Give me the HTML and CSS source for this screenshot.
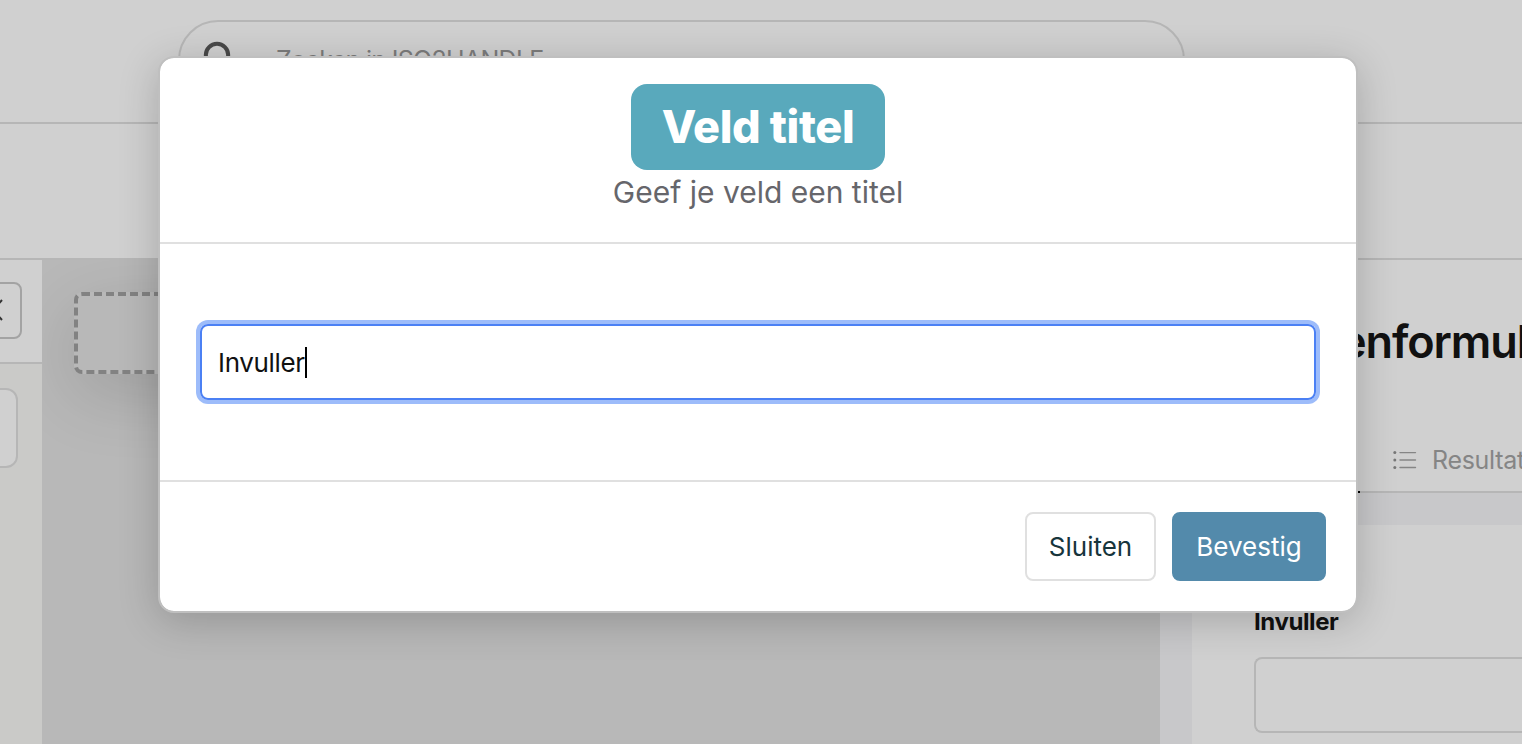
FILE: index.html
```
<!DOCTYPE html>
<html lang="nl">
<head>
    <meta charset="UTF-8">
    <meta name="viewport" content="width=device-width, initial-scale=1.0">
    <title>Veld titel</title>
    <link rel="stylesheet" href="styles.css">
</head>
<body>
    <header class="topbar">
        <div class="search">
            <svg class="search-icon" viewBox="0 0 34 34" fill="none" stroke="#494949" stroke-width="4">
                <circle cx="15" cy="15" r="11.2"/>
                <path d="M23 23l9 9"/>
            </svg>
            <span>Zoeken in ISO2HANDLE</span>
        </div>
    </header>
    <div class="subbar"></div>
    <main class="builder">
        <aside class="sidebar">
            <div class="sidebar-top">
                <button class="collapse">
                    <svg width="12" height="22" viewBox="0 0 12 22" fill="none" stroke="#333" stroke-width="2">
                        <path d="M11 1L2 11l9 10"/>
                    </svg>
                </button>
            </div>
            <div class="sidebar-item"></div>
        </aside>
        <section class="canvas">
            <div class="dropzone"></div>
        </section>
        <section class="form">
            <div class="form-head">
                <h1>enformul</h1>
                <div class="tabs">
                    <span class="tab-active"></span>
                    <svg width="24" height="20" viewBox="0 0 24 20" fill="none" stroke="#858585" stroke-width="1.4" stroke-linecap="round">
                        <path d="M7 2.6h15.5M7 10h15.5M7 17.5h15.5"/>
                        <g fill="#777" stroke="none">
                            <circle cx="1.8" cy="2.6" r="1.5"/>
                            <circle cx="1.8" cy="10" r="1.5"/>
                            <circle cx="1.8" cy="17.5" r="1.5"/>
                        </g>
                    </svg>
                    <span>Resultat</span>
                </div>
            </div>
            <div class="form-card">
                <div class="label">Invuller</div>
                <div class="field"></div>
            </div>
        </section>
    </main>

    <div class="modal">
        <div class="modal-header">
            <h2>Veld titel</h2>
            <p>Geef je veld een titel</p>
        </div>
        <div class="modal-body">
            <div class="input"><span>Invuller</span><i class="caret"></i></div>
        </div>
        <div class="modal-footer">
            <button class="button">Sluiten</button>
            <button class="button primary">Bevestig</button>
        </div>
    </div>
</body>
</html>
```

FILE: styles.css
```
* {
    box-sizing: border-box;
}

body {
    font-family: Inter, 'Liberation Sans', sans-serif;
    background-color: #d0d0d0;
    margin: 0;
    height: 744px;
    display: flex;
    flex-direction: column;
    overflow: hidden;
}

h1, h2, p {
    margin: 0;
}

button {
    font-family: inherit;
}

svg {
    flex: none;
}

.topbar {
    height: 124px;
    padding: 20px 0 0 178px;
    border-bottom: 2px solid #b6b6b6;
}

.search {
    display: flex;
    align-items: center;
    width: 1007px;
    height: 80px;
    padding-left: 21px;
    border: 2px solid #b6b6b6;
    border-radius: 40px;
    font-size: 25px;
    letter-spacing: -0.7px;
    color: #7c7c7c;
}

.search-icon {
    width: 34px;
    height: 34px;
    margin: -7px 41px 0 1px;
}

.search span {
    margin-left: -1px;
}

.subbar {
    height: 136px;
    border-bottom: 2px solid #b6b6b6;
}

.builder {
    flex: 1;
    display: flex;
    min-height: 0;
}

.sidebar {
    width: 42px;
    background-color: #cacac8;
}

.sidebar-top {
    height: 104px;
    padding-top: 22px;
    background-color: #d0d0d0;
    border-bottom: 2px solid #b6b6b6;
}

.collapse {
    display: flex;
    align-items: center;
    width: 58px;
    height: 57px;
    margin-left: -36px;
    padding: 0 0 2px 25px;
    background: none;
    border: 2px solid #a3a3a3;
    border-radius: 8px;
}

.sidebar-item {
    width: 60px;
    height: 80px;
    margin: 24px 0 0 -42px;
    background-color: #d0d0d0;
    border: 2px solid #b6b6b6;
    border-radius: 12px;
}

.canvas {
    width: 1118px;
    padding: 32px;
    background-color: #b8b8b8;
    overflow: hidden;
}

.dropzone {
    height: 82px;
    border: 4px dashed #828282;
    border-radius: 8px;
    background-color: #b8b8b8;
    box-shadow: 0 20px 70px rgba(0, 0, 0, 0.14);
}

.form {
    display: flex;
    flex-direction: column;
    width: 362px;
    background-color: #c8c8ca;
    white-space: nowrap;
}

.form-head {
    height: 233px;
    padding: 54px 0 0 180px;
    background-color: #d0d0d0;
    border-bottom: 2px solid #b6b6b6;
}

h1 {
    font-size: 45px;
    line-height: 56px;
    font-weight: 600;
    letter-spacing: -1.1px;
    color: #111;
}

.tabs {
    display: flex;
    align-items: center;
    height: 121px;
    padding: 59px 0 0 53px;
    gap: 15px;
    font-size: 25px;
    letter-spacing: -0.3px;
    color: #858585;
    position: relative;
}

.tab-active {
    position: absolute;
    left: -94px;
    bottom: -2px;
    width: 114px;
    height: 2px;
    background-color: #000;
}

.form-card {
    flex: 1;
    margin: 32px 0 0 32px;
    padding: 82px 0 0 62px;
    background-color: #d0d0d0;
}

.label {
    font-size: 24px;
    line-height: 30px;
    font-weight: 700;
    letter-spacing: -0.4px;
    color: #111;
}

.field {
    height: 76px;
    margin-top: 20px;
    border: 2px solid #b6b6b6;
    border-right: none;
    border-radius: 8px 0 0 8px;
}

.modal {
    position: absolute;
    top: 56px;
    left: 158px;
    width: 1200px;
    height: 557px;
    background-color: #fff;
    background-clip: padding-box;
    border: 2px solid #bfbfbf;
    border-radius: 16px;
    box-shadow: 0 8px 40px rgba(0, 0, 0, 0.2);
}

.modal-header {
    display: flex;
    flex-direction: column;
    align-items: center;
    height: 186px;
    padding-top: 26px;
    border-bottom: 2px solid #e0e0e0;
}

h2 {
    width: 254px;
    height: 86px;
    background-color: #59a9bc;
    border-radius: 16px;
    color: #fff;
    font-size: 45px;
    line-height: 86px;
    font-weight: 800;
    letter-spacing: -0.4px;
    text-align: center;
}

.modal-header p {
    font-size: 30px;
    line-height: 44px;
    color: #66666b;
}

.modal-body {
    height: 238px;
    padding: 80px 40px;
    border-bottom: 2px solid #e0e0e0;
}

.input {
    display: flex;
    align-items: center;
    height: 76px;
    padding-left: 16px;
    border: 2px solid #4b80f4;
    border-radius: 8px;
    box-shadow: 0 0 0 4px #9dbcfa;
    font-size: 26px;
    letter-spacing: -0.35px;
    color: #111;
}

.caret {
    width: 2px;
    height: 31px;
    background-color: #000;
}

.modal-footer {
    display: flex;
    justify-content: flex-end;
    gap: 16px;
    padding: 30px;
}

.button {
    width: 131px;
    height: 69px;
    padding: 0;
    background-color: #fff;
    border: 2px solid #e0e0e0;
    border-radius: 8px;
    font-size: 26px;
    color: #17353c;
}

.button.primary {
    width: 154px;
    background-color: #538aab;
    border-color: #538aab;
    color: #fff;
}
```
